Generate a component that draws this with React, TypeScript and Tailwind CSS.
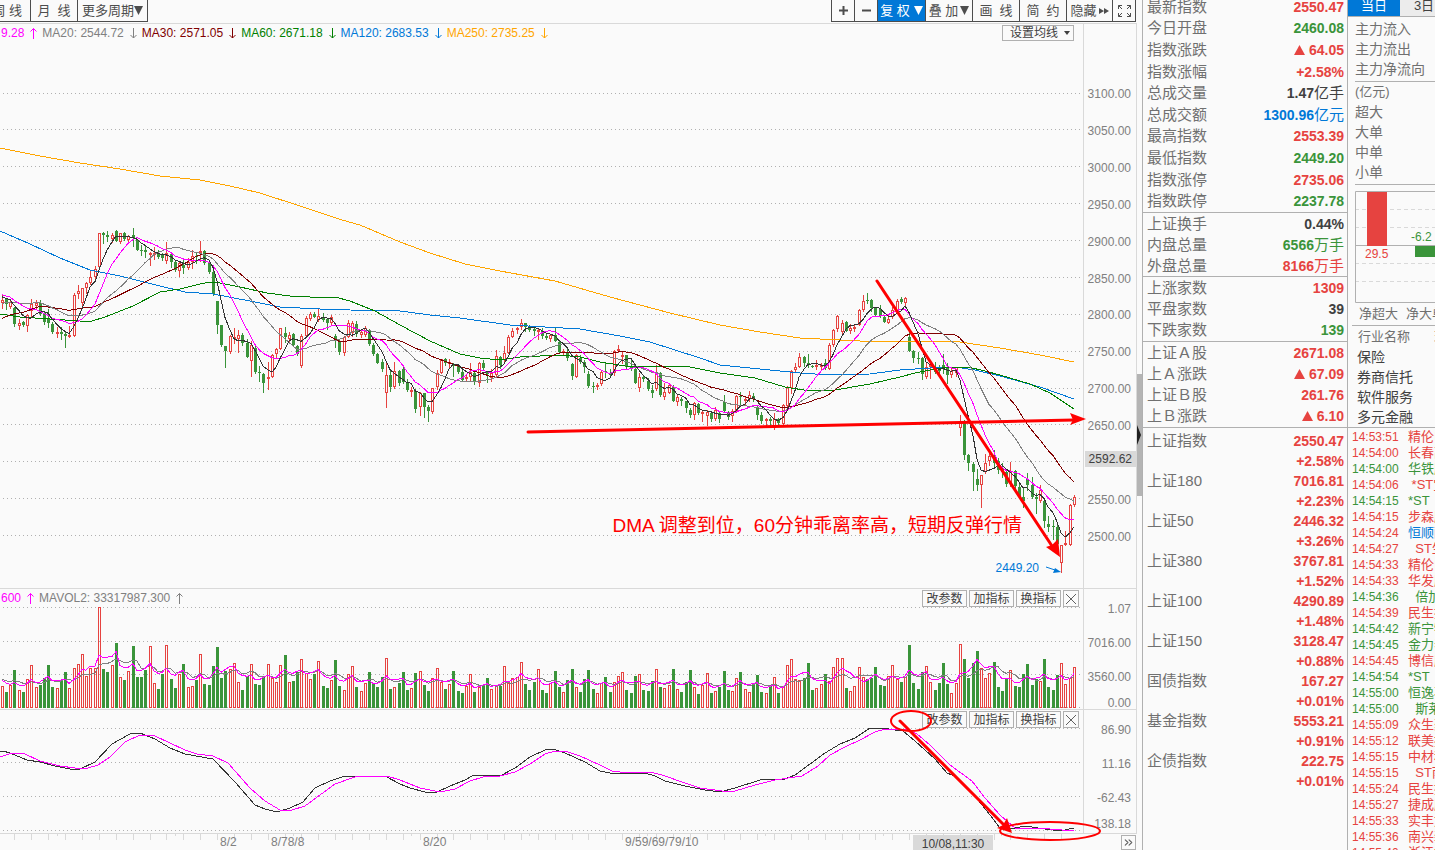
import { ChevronsRight } from 'lucide-react';
import clsx from 'clsx';

// [rising, high, body top, body bottom, low] on the price pane's own scale
type Candle = [number, number, number, number, number];

const CANDLES: Candle[] = [
  [1, 295, 300, 303, 308], [0, 298, 299, 304, 309], [1, 300, 302, 307, 308], [0, 307, 308, 324, 326], [1, 319, 323, 326, 329],
  [0, 321, 322, 325, 326], [1, 314, 315, 326, 331], [1, 299, 304, 311, 317], [1, 300, 303, 306, 308], [0, 300, 303, 314, 315],
  [0, 312, 313, 322, 324], [0, 309, 319, 323, 327], [0, 322, 324, 332, 333], [1, 327, 332, 334, 337], [0, 327, 332, 334, 339],
  [0, 331, 334, 336, 347], [1, 326, 335, 337, 337], [1, 293, 295, 336, 336], [1, 285, 291, 294, 298], [1, 288, 288, 303, 306],
  [1, 282, 283, 288, 293], [1, 271, 277, 283, 284], [1, 266, 269, 277, 278], [1, 233, 233, 267, 267], [0, 232, 233, 235, 243],
  [0, 231, 235, 237, 241], [1, 233, 235, 239, 242], [0, 230, 231, 241, 241], [1, 233, 233, 242, 243], [0, 232, 233, 239, 240],
  [1, 235, 236, 240, 241], [0, 228, 235, 238, 246], [0, 239, 240, 250, 250], [0, 245, 250, 251, 255], [0, 246, 250, 252, 257],
  [1, 252, 253, 255, 265], [1, 247, 253, 254, 259], [0, 250, 253, 257, 258], [0, 253, 255, 258, 260], [1, 242, 253, 261, 263],
  [0, 253, 254, 262, 267], [0, 261, 262, 270, 271], [1, 261, 263, 271, 276], [0, 259, 265, 268, 273], [1, 258, 262, 268, 269],
  [1, 250, 256, 262, 268], [0, 252, 256, 257, 263], [1, 241, 251, 253, 261], [0, 250, 251, 263, 264], [0, 262, 263, 272, 273],
  [0, 270, 272, 294, 295], [0, 301, 301, 325, 333], [0, 325, 325, 345, 346], [0, 346, 346, 351, 367], [1, 335, 336, 352, 353],
  [1, 328, 337, 338, 343], [1, 330, 335, 339, 352], [0, 333, 335, 343, 345], [0, 339, 343, 357, 357], [1, 341, 345, 361, 376],
  [0, 345, 348, 372, 373], [0, 366, 372, 373, 381], [0, 373, 374, 383, 392], [1, 362, 377, 379, 389], [1, 354, 355, 377, 377],
  [1, 348, 349, 354, 357], [1, 328, 328, 349, 349], [0, 327, 333, 337, 342], [1, 332, 335, 339, 343], [0, 333, 334, 345, 345],
  [0, 345, 346, 354, 355], [1, 334, 336, 366, 367], [1, 316, 318, 336, 337], [1, 312, 314, 319, 320], [0, 312, 314, 317, 317],
  [1, 309, 316, 320, 321], [0, 313, 317, 320, 321], [0, 318, 319, 323, 329], [1, 315, 317, 323, 324], [0, 334, 336, 341, 347],
  [0, 340, 341, 352, 354], [1, 336, 337, 353, 355], [1, 320, 323, 337, 337], [1, 321, 323, 333, 336], [0, 321, 324, 334, 336],
  [1, 330, 332, 335, 337], [1, 326, 328, 335, 336], [0, 329, 331, 344, 345], [0, 343, 345, 354, 355], [0, 353, 354, 363, 363],
  [0, 359, 362, 369, 371], [1, 363, 375, 393, 407], [0, 371, 375, 387, 391], [1, 362, 371, 387, 388], [0, 370, 371, 383, 385],
  [0, 365, 369, 382, 383], [0, 379, 382, 390, 391], [1, 387, 390, 391, 396], [0, 389, 391, 409, 412], [1, 392, 393, 407, 415],
  [0, 393, 393, 407, 417], [0, 405, 407, 411, 421], [1, 388, 388, 412, 413], [1, 370, 373, 387, 389], [1, 359, 359, 373, 373],
  [0, 358, 359, 363, 365], [1, 359, 362, 364, 367], [0, 363, 364, 366, 376], [0, 365, 365, 372, 373], [0, 370, 372, 380, 381],
  [1, 375, 377, 379, 380], [1, 363, 372, 377, 380], [0, 372, 373, 382, 384], [1, 362, 363, 383, 386], [0, 360, 363, 368, 370],
  [0, 372, 372, 374, 382], [1, 369, 373, 378, 381], [1, 350, 356, 375, 377], [0, 356, 357, 365, 368], [1, 346, 353, 360, 362],
  [1, 335, 337, 353, 353], [1, 328, 331, 337, 337], [1, 327, 328, 330, 333], [1, 319, 323, 327, 329], [0, 323, 323, 327, 331],
  [0, 325, 328, 330, 331], [0, 328, 329, 331, 335], [1, 328, 330, 332, 339], [0, 328, 331, 336, 338], [0, 334, 336, 338, 339],
  [1, 334, 335, 339, 341], [0, 327, 335, 341, 341], [0, 340, 342, 352, 352], [1, 349, 351, 353, 355], [0, 349, 352, 358, 360],
  [0, 363, 364, 376, 379], [1, 354, 355, 377, 377], [0, 355, 358, 362, 363], [0, 360, 362, 367, 372], [0, 371, 374, 386, 387],
  [0, 382, 386, 387, 392], [1, 383, 385, 387, 389], [1, 370, 372, 384, 385], [0, 363, 371, 372, 377], [0, 369, 373, 375, 376],
  [1, 350, 351, 373, 375], [1, 345, 349, 351, 352], [1, 352, 355, 357, 363], [0, 355, 355, 367, 369], [0, 360, 367, 369, 370],
  [0, 368, 369, 383, 383], [1, 373, 377, 388, 391], [0, 375, 377, 379, 381], [0, 378, 381, 389, 390], [0, 385, 390, 393, 397],
  [1, 365, 373, 389, 390], [0, 372, 373, 395, 396], [1, 383, 392, 397, 399], [1, 383, 385, 393, 393], [0, 385, 387, 401, 401],
  [1, 395, 397, 402, 405], [0, 397, 399, 401, 405], [0, 401, 401, 408, 412], [0, 408, 410, 415, 417], [1, 402, 403, 415, 419],
  [0, 403, 404, 413, 414], [1, 411, 412, 413, 421], [1, 410, 412, 416, 425], [0, 411, 413, 419, 421], [1, 407, 410, 419, 420],
  [0, 412, 413, 419, 422], [0, 395, 402, 411, 412], [0, 411, 412, 417, 419], [1, 409, 411, 416, 421], [1, 395, 396, 411, 412],
  [0, 392, 396, 397, 404], [1, 396, 399, 401, 405], [1, 391, 395, 399, 401], [0, 393, 396, 399, 401], [0, 406, 407, 415, 419],
  [0, 412, 415, 421, 423], [1, 418, 419, 421, 426], [0, 417, 419, 421, 425], [1, 413, 419, 428, 429], [0, 418, 419, 423, 425],
  [1, 404, 405, 424, 425], [1, 386, 387, 406, 406], [1, 370, 371, 388, 393], [1, 363, 367, 370, 372], [1, 353, 357, 367, 367],
  [0, 356, 357, 363, 366], [0, 354, 363, 365, 367], [0, 365, 366, 367, 367], [1, 360, 365, 367, 369], [1, 363, 365, 367, 369],
  [0, 359, 363, 368, 369], [1, 343, 345, 369, 369], [1, 329, 330, 345, 346], [1, 315, 316, 329, 331], [1, 320, 323, 332, 334],
  [0, 321, 322, 331, 331], [1, 324, 328, 331, 333], [1, 325, 327, 329, 331], [1, 309, 310, 325, 325], [1, 295, 301, 310, 311],
  [0, 293, 300, 301, 303], [0, 299, 300, 308, 311], [0, 307, 308, 315, 316], [0, 305, 309, 316, 317], [0, 316, 317, 322, 322],
  [1, 315, 319, 323, 323], [1, 307, 310, 317, 318], [1, 299, 301, 311, 311], [0, 297, 299, 302, 303], [1, 297, 298, 303, 307],
  [0, 332, 337, 351, 351], [0, 350, 351, 358, 362], [0, 352, 358, 359, 363], [0, 357, 358, 374, 379], [1, 363, 367, 377, 378],
  [1, 360, 365, 367, 378], [0, 362, 367, 372, 373], [0, 365, 369, 371, 373], [0, 354, 365, 367, 373], [0, 363, 367, 375, 383],
  [1, 367, 371, 375, 377], [1, 367, 367, 373, 376], [1, 415, 421, 428, 435], [0, 420, 421, 455, 459], [0, 454, 455, 463, 470],
  [0, 462, 464, 472, 490], [0, 469, 479, 485, 490], [1, 475, 475, 485, 507], [1, 454, 463, 472, 473], [1, 452, 456, 461, 465],
  [0, 450, 455, 463, 468], [0, 458, 461, 470, 473], [0, 463, 469, 472, 477], [0, 470, 472, 484, 486], [1, 462, 471, 483, 486],
  [0, 470, 471, 486, 490], [0, 483, 487, 497, 498], [0, 487, 497, 501, 507], [0, 473, 479, 485, 490], [0, 477, 485, 497, 498],
  [0, 493, 497, 499, 513], [1, 485, 490, 501, 502], [0, 500, 501, 521, 527], [0, 516, 524, 527, 531], [0, 520, 526, 527, 539],
  [0, 525, 527, 544, 547], [1, 545, 545, 563, 572], [1, 531, 543, 545, 545], [1, 504, 505, 545, 545], [1, 495, 497, 505, 506],
];

const VOLUMES = [
  65, 47, 68, 113, 53, 47, 86, 128, 62, 68, 89, 128, 62, 59, 80, 107, 59, 119, 133, 161,
  95, 119, 119, 302, 116, 107, 128, 194, 92, 83, 110, 185, 92, 92, 113, 185, 74, 56, 101, 188,
  86, 59, 101, 131, 62, 65, 83, 161, 71, 68, 125, 182, 89, 110, 116, 134, 77, 53, 95, 133,
  71, 68, 92, 131, 89, 77, 128, 158, 77, 80, 107, 146, 104, 86, 101, 140, 65, 59, 83, 143,
  65, 53, 101, 125, 62, 50, 74, 107, 74, 62, 92, 149, 56, 62, 74, 107, 53, 59, 104, 110,
  68, 50, 89, 119, 77, 56, 71, 110, 50, 44, 65, 101, 47, 62, 68, 89, 56, 68, 65, 125,
  74, 89, 92, 137, 71, 53, 77, 116, 53, 44, 74, 110, 62, 47, 83, 116, 62, 47, 86, 113,
  56, 44, 74, 92, 47, 77, 95, 107, 53, 44, 95, 101, 53, 50, 80, 116, 62, 59, 68, 116,
  56, 47, 77, 113, 62, 41, 68, 104, 44, 50, 62, 110, 53, 50, 89, 107, 56, 47, 71, 98,
  47, 44, 65, 92, 44, 62, 128, 146, 86, 83, 89, 134, 53, 59, 71, 101, 80, 122, 149, 149,
  59, 50, 65, 122, 92, 86, 89, 122, 68, 65, 95, 128, 86, 77, 92, 188, 74, 56, 107, 125,
  77, 53, 74, 134, 71, 44, 74, 191, 146, 89, 134, 170, 119, 89, 104, 137, 62, 50, 86, 113,
  65, 62, 101, 131, 68, 86, 80, 146, 62, 53, 98, 134, 71, 89, 122,
];

// closes before the first visible bar, oldest first
const LEAD_CLOSES = [
  ...Array(10).fill(352),
  ...Array(10).fill(314),
  ...Array(5).fill(292),
  ...Array(5).fill(296),
];
const LEAD_VOLUMES = Array(10).fill(88);

const MA60 =
  '0,314 20,317 50,319 80,321 92,321 105,317 133,306 160,292 180,289 200,284 210,282 220,283 240,287 267,293 290,296 310,297 335,297 350,301 375,311 400,325 430,341 460,354 480,358 500,360 520,357 560,355 580,357 600,362 625,366 690,367 720,373 755,378 785,387 810,391 835,390 870,384 900,377 915,373 935,369 950,367 968,367 985,371 1000,375 1030,384 1050,393 1074,409';
const MA120 =
  '0,231 30,244 60,258 90,270 120,276 160,286 185,292 213,294 250,301 280,307 320,309 350,310 400,311 430,315 460,318 510,325 580,329 620,336 650,342 700,358 720,365 760,369 800,373 830,375 870,374 900,370 930,368 955,367 975,370 1000,376 1040,387 1074,399';
const MA250 =
  '0,148 40,156 80,163 120,169 160,176 200,180 230,186 260,193 300,206 342,220 360,225 400,242 430,253 465,264 500,271 555,281 610,297 670,313 720,325 760,332 800,338 860,341 920,341 960,342 1000,348 1040,355 1074,362';
const DIF =
  '0,751 3,751 10,753 27,760 40,762 55,766 70,769 80,769 95,762 112,744 130,734 140,733 155,739 170,748 185,754 213,759 235,782 255,805 265,809 277,812 290,808 303,802 315,788 330,781 345,776 385,776 400,784 410,788 425,792 437,792 450,786 465,780 472,776 482,775 500,776 515,768 530,757 545,750 553,749 565,753 585,762 600,771 610,773 645,773 655,776 665,781 685,786 705,790 720,792 735,788 760,780 785,779 795,775 825,753 840,744 855,738 870,728 882,728 895,730 903,731 915,741 935,759 947,773 957,777 975,796 990,815 1000,828 1010,829 1025,826 1045,829 1060,831 1074,828';
const DIFMA =
  '0,757 12,753 25,754 40,761 60,766 75,768 88,768 98,765 110,757 125,742 140,735 155,736 170,743 185,750 197,754 213,756 228,763 250,788 265,801 280,810 292,810 305,806 320,795 335,784 355,777 387,776 400,780 420,788 440,792 455,789 470,781 483,777 500,776 515,772 530,764 545,754 555,751 565,751 580,756 600,765 612,771 620,772 650,772 662,775 685,783 700,788 722,791 735,791 755,785 775,780 802,776 818,766 830,755 845,747 860,740 875,732 885,729 905,729 917,734 930,745 950,765 972,781 985,798 1000,815 1015,828 1050,829 1062,830 1074,830';

const PLOT_WIDTH = 1083;
const RED = '#e64340';
const GREEN = '#3a943a';

const barX = (i: number) => Math.floor(2.3 + i * 4.2205);

const movingAverage = (lead: number[], values: number[], span: number, toY = (v: number) => v) => {
  const all = [...lead, ...values];
  return values
    .map((_, i) => {
      const end = lead.length + i + 1;
      const slice = all.slice(Math.max(0, end - span), end);
      const avg = slice.reduce((a, b) => a + b, 0) / slice.length;
      return `${barX(i)},${toY(avg).toFixed(1)}`;
    })
    .join(' ');
};

const closes = CANDLES.map(([up, , top, bottom]) => (up ? top : bottom));

const Line = ({ points, color }: { points: string; color: string }) => (
  <polyline points={points} fill="none" stroke={color} strokeWidth="1" shapeRendering="crispEdges" />
);

const GridLines = ({ ys }: { ys: number[] }) => (
  <g stroke="#b0b0b0" strokeDasharray="1 3" shapeRendering="crispEdges">
    {ys.map((y) => (
      <line key={y} x1="3" x2={PLOT_WIDTH} y1={y + 0.5} y2={y + 0.5} />
    ))}
  </g>
);

const PriceChart = () => (
  <svg viewBox="0 24 1083 564" preserveAspectRatio="none" className="absolute inset-0 h-full w-full">
    <GridLines ys={[93, 129, 166, 203, 240, 277, 314, 351, 388, 424, 461, 498, 535]} />
    <g shapeRendering="crispEdges">
      {CANDLES.map(([up, high, top, bottom, low], i) => {
        const x = barX(i);
        return up ? (
          <g key={i} stroke={RED} fill="none">
            <path d={`M${x + 0.5} ${high}V${top}M${x + 0.5} ${bottom}V${low + 1}`} />
            <rect x={x - 0.5} y={top + 0.5} width="2" height={Math.max(1, bottom - top - 1)} />
          </g>
        ) : (
          <g key={i} fill={GREEN}>
            <rect x={x} y={high} width="1" height={low - high + 1} />
            <rect x={x - 1} y={top} width="3" height={Math.max(1, bottom - top)} />
          </g>
        );
      })}
    </g>
    <Line points={MA250} color="#ffa500" />
    <Line points={MA120} color="#0078d7" />
    <Line points={MA60} color="#008000" />
    <Line points={movingAverage(LEAD_CLOSES, closes, 30)} color="#800000" />
    <Line points={movingAverage(LEAD_CLOSES, closes, 20)} color="#808080" />
    <Line points={movingAverage(LEAD_CLOSES, closes, 10)} color="#ff00ff" />
    <Line points={movingAverage(LEAD_CLOSES, closes, 5)} color="#333333" />
  </svg>
);

const VolumeChart = () => {
  const toY = (v: number) => 708 - v / 3;
  return (
    <svg viewBox="0 589 1083 120" preserveAspectRatio="none" className="absolute inset-0 h-full w-full">
      <GridLines ys={[607, 641, 674, 707]} />
      <g shapeRendering="crispEdges">
        {VOLUMES.map((v, i) => {
          const x = barX(i);
          const y = Math.round(toY(v));
          return CANDLES[i][0] ? (
            <rect key={i} x={x - 0.5} y={y + 0.5} width="2" height={707 - y} fill="none" stroke={RED} />
          ) : (
            <rect key={i} x={x - 1} y={y} width="3" height={708 - y} fill={GREEN} />
          );
        })}
      </g>
      <Line points={movingAverage(LEAD_VOLUMES, VOLUMES, 10, toY)} color="#808080" />
      <Line points={movingAverage(LEAD_VOLUMES, VOLUMES, 5, toY)} color="#ff00ff" />
    </svg>
  );
};

const DmaChart = () => (
  <svg viewBox="0 710 1083 123" preserveAspectRatio="none" className="absolute inset-0 h-full w-full">
    <GridLines ys={[728, 762, 796, 830]} />
    <Line points={DIF} color="#333333" />
    <Line points={DIFMA} color="#ff00ff" />
  </svg>
);

const TimeTicks = () => (
  <svg viewBox="0 0 1083 16" preserveAspectRatio="none" className="absolute inset-0 h-full w-full">
    <g fill="#d9d9d9">
      {Array.from({ length: 63 }, (_, k) => (
        <rect key={k} x={barX(3 + k * 4)} y="0" width="1" height="6" />
      ))}
      {Array.from({ length: 9 }, (_, k) => (
        <rect key={k} x={57 + k * 118} y="0" width="1" height="2" />
      ))}
    </g>
  </svg>
);

// hand-drawn marks that run over all the panes
const Annotations = () => (
  <svg
    viewBox="0 24 1137 826"
    preserveAspectRatio="none"
    className="pointer-events-none absolute inset-0 h-full w-full"
  >
    <g stroke="#ff0000" strokeWidth="3" strokeLinecap="round" fill="none">
      <path d="M877 281L1052 546" />
      <path d="M528 432L1074 420" />
      <path d="M900 721L1004 825" />
    </g>
    <g fill="#ff0000">
      <path d="M1060 557L1046 547L1052 545L1058 539Z" />
      <path d="M1086 419L1070 425L1073 420L1070 413Z" />
      <path d="M1012 833L997 828L1003 825L1007 818Z" />
    </g>
    <g stroke="#ff0000" strokeWidth="2" fill="none">
      <ellipse cx="911" cy="721" rx="20" ry="10" />
      <ellipse cx="1050" cy="831" rx="50" ry="9" />
    </g>
    <path d="M1046 567L1055 570" stroke="#0078d7" fill="none" />
    <path d="M1061 572L1053 573L1055 568Z" fill="#0078d7" />
  </svg>
);

const TrendArrow = ({ up }: { up?: boolean }) => (
  <svg width="18" height="12" viewBox="0 0 18 12" className="shrink-0" fill="none" stroke="currentColor">
    {up ? <path d="M9.5 12V1.5M6.5 4.5L9.5 1.5L12.5 4.5" /> : <path d="M9.5 1V11M6.5 8L9.5 11L12.5 8" />}
  </svg>
);

type LegendItem = { text: string; up?: boolean; color: string };

const LEGEND: LegendItem[] = [
  { text: '9.28', up: true, color: 'text-[#ff00ff]' },
  { text: 'MA20: 2544.72', color: 'text-[#808080]' },
  { text: 'MA30: 2571.05', color: 'text-[#800000]' },
  { text: 'MA60: 2671.18', color: 'text-[#008000]' },
  { text: 'MA120: 2683.53', color: 'text-[#0078d7]' },
  { text: 'MA250: 2735.25', color: 'text-[#ffa500]' },
];

const VOLUME_LEGEND: LegendItem[] = [
  { text: '600', up: true, color: 'text-[#ff00ff]' },
  { text: 'MAVOL2: 33317987.300', up: true, color: 'text-[#808080]' },
];

const Legend = ({ items }: { items: LegendItem[] }) => (
  <div className="absolute left-px top-0 flex h-[18px] items-center whitespace-nowrap text-xs">
    {items.map((item) => (
      <span key={item.text} className={clsx('flex items-center', item.color)}>
        {item.text}
        <TrendArrow up={item.up} />
      </span>
    ))}
  </div>
);

const PaneButtons = () => (
  <div className="absolute right-1 top-px flex gap-[2px]">
    {['改参数', '加指标', '换指标'].map((label) => (
      <button
        key={label}
        className="h-[17px] w-[45px] border border-[#b0b0b0] bg-[#fafafa] text-center text-xs leading-[17px] text-[#404040]"
      >
        {label}
      </button>
    ))}
    <button aria-label="关闭" className="flex h-[17px] w-4 items-center justify-center border border-[#b0b0b0] bg-[#fafafa]">
      <svg width="10" height="10" viewBox="0 0 10 10" stroke="#606060">
        <path d="M0 0L10 10M10 0L0 10" />
      </svg>
    </button>
  </div>
);

const PRICE_LABELS = [
  '3100.00', '3050.00', '3000.00', '2950.00', '2900.00', '2850.00', '2800.00',
  '2750.00', '2700.00', '2650.00', '', '2550.00', '2500.00',
];

const AxisLabels = ({ labels }: { labels: string[] }) => (
  <div className="w-[54px] shrink-0 border-x border-[#d9d9d9] pr-[5px] pt-3 text-right text-xs leading-4 text-[#808080]">
    {labels.map((label, i) => (
      <div key={label} className={i === 3 ? '-mt-2 h-4' : 'h-[34px]'}>
        {label}
      </div>
    ))}
  </div>
);

const TIME_LABELS = [
  { text: '8/2', at: 220 },
  { text: '8/78/8', at: 271 },
  { text: '8/20', at: 423 },
  { text: '9/59/69/79/10', at: 625 },
];

const Triangle = ({ className }: { className?: string }) => (
  <svg width="9" height="9" viewBox="0 0 9 9" className={className} fill="currentColor">
    <path d="M0 0H9L4.5 9Z" />
  </svg>
);

const toolButton = 'flex h-full items-center justify-center whitespace-pre border-r border-[#4d4d4d]';

const Toolbar = () => (
  <div className="flex h-[23px] shrink-0 justify-between pr-px text-[13px] leading-5 text-[#4d4d4d]">
    <div className="flex h-[22px] border-b border-[#4d4d4d]">
      <button className={clsx(toolButton, 'w-[31px] justify-end pr-2')}>周 线</button>
      <button className={clsx(toolButton, 'w-[47px]')}>月  线</button>
      <button className={clsx(toolButton, 'w-[70px]')}>
        更多周期
        <Triangle />
      </button>
    </div>
    <div className="flex h-[22px] border-b border-l border-[#4d4d4d]">
      <button aria-label="放大" className={clsx(toolButton, 'w-[23px]')}>
        <svg width="9" height="9" viewBox="0 0 9 9" stroke="currentColor" strokeWidth="2">
          <path d="M0 4.5H9M4.5 0V9" />
        </svg>
      </button>
      <button aria-label="缩小" className={clsx(toolButton, 'w-[23px]')}>
        <svg width="9" height="9" viewBox="0 0 9 9" stroke="currentColor" strokeWidth="2">
          <path d="M0 4.5H9" />
        </svg>
      </button>
      <button className={clsx(toolButton, 'w-12 gap-1 bg-[#0078d7] text-white')}>
        复 权
        <Triangle />
      </button>
      <button className={clsx(toolButton, 'w-[47px] gap-[2px]')}>
        叠 加
        <Triangle />
      </button>
      <button className={clsx(toolButton, 'w-[47px]')}>画  线</button>
      <button className={clsx(toolButton, 'w-[47px]')}>简  约</button>
      <button className={clsx(toolButton, 'w-[46px] gap-[2px]')}>
        隐藏
        <svg width="10" height="6" viewBox="0 0 10 6" fill="currentColor">
          <path d="M0 0L5 3L0 6ZM5 0L10 3L5 6Z" />
        </svg>
      </button>
      <button aria-label="全屏" className={clsx(toolButton, 'w-[23px]')}>
        <svg width="13" height="12" viewBox="0 0 13 12" stroke="currentColor" fill="none">
          <path d="M.5 4V.5H4M.5 .5L4 4M9 .5H12.5V4M12.5 .5L9 4M.5 8V11.5H4M.5 11.5L4 8M12.5 8V11.5H9M12.5 11.5L9 8" />
        </svg>
      </button>
    </div>
  </div>
);

const ChartArea = () => (
  <section className="flex min-w-0 flex-1 flex-col">
    <Toolbar />
    <div className="relative flex min-h-0 flex-1 flex-col border-t border-[#d9d9d9]">
      <div className="flex min-h-0 flex-1 border-b border-[#d9d9d9]">
        <div className="relative min-w-0 flex-1">
          <PriceChart />
          <Legend items={LEGEND} />
          <button className="absolute right-[9px] top-px flex h-4 w-[72px] items-center justify-center gap-[6px] border border-[#b0b0b0] bg-[#fafafa] pl-1 text-xs leading-4 text-[#404040]">
            设置均线
            <svg width="6" height="4" viewBox="0 0 6 4" fill="currentColor">
              <path d="M0 0H6L3 4Z" />
            </svg>
          </button>
        </div>
        <div className="relative flex w-[54px] shrink-0 flex-col justify-between border-x border-[#d9d9d9] pb-[43px] pr-[5px] pt-[62px] text-right text-xs leading-4 text-[#808080]">
          {PRICE_LABELS.map((label, i) => (
            <div key={i} className="h-4">{label}</div>
          ))}
          <div className="absolute left-px right-0 top-[427px] bg-[#d9d9d9] pr-1 text-[#404040]">2592.62</div>
        </div>
      </div>

      <div className="flex h-[121px] shrink-0 border-b border-[#d9d9d9]">
        <div className="relative min-w-0 flex-1">
          <VolumeChart />
          <Legend items={VOLUME_LEGEND} />
          <PaneButtons />
        </div>
        <AxisLabels labels={['1.07', '7016.00', '3560.00', '0.00']} />
      </div>

      <div className="flex h-[124px] shrink-0 border-b border-[#d9d9d9]">
        <div className="relative min-w-0 flex-1">
          <DmaChart />
          <PaneButtons />
        </div>
        <AxisLabels labels={['86.90', '11.16', '-62.43', '138.18']} />
      </div>

      <div className="flex h-4 shrink-0 text-xs leading-4 text-[#808080]">
        <div className="relative min-w-0 flex-1">
          <TimeTicks />
          {TIME_LABELS.map((label) => (
            <span key={label.text} className="absolute top-0" style={{ left: `${(label.at / PLOT_WIDTH) * 100}%` }}>
              {label.text}
            </span>
          ))}
          <span className="absolute right-[90px] top-px h-[15px] w-20 bg-[#d9d9d9] pt-px text-center text-[#404040]">
            10/08,11:30
          </span>
        </div>
        <div className="flex w-[54px] shrink-0 justify-end pr-px pt-px">
          <button aria-label="展开" className="flex h-[15px] w-[15px] items-center justify-center border border-[#b0b0b0] text-[#606060]">
            <ChevronsRight size={13} strokeWidth={2} />
          </button>
        </div>
      </div>

      <Annotations />
      <p className="absolute right-[115px] top-[488px] whitespace-nowrap text-[19px] leading-7 text-[#ff0000]">
        DMA 调整到位，60分钟乖离率高，短期反弹行情
      </p>
      <span className="absolute right-[98px] top-[536px] text-xs leading-4 text-[#0078d7]">2449.20</span>
    </div>
  </section>
);

const Splitter = () => (
  <div className="relative w-[5px] shrink-0">
    <div className="absolute top-[44%] h-[122px] w-full bg-[#b4b4b4]" />
    <svg width="4" height="20" viewBox="0 0 4 20" className="absolute left-0 top-[50%]">
      <path d="M0 0L4 10L0 20Z" fill="#202020" />
    </svg>
  </div>
);

const tones = {
  up: 'text-[#e64340]',
  down: 'text-[#3a943a]',
  flat: 'text-[#404040]',
  info: 'text-[#0078d7]',
};

type Quote = {
  label: string;
  value: string;
  unit?: string;
  tone: keyof typeof tones;
  rise?: boolean;
};

const SUMMARY: Quote[] = [
  { label: '最新指数', value: '2550.47', tone: 'up' },
  { label: '今日开盘', value: '2460.08', tone: 'down' },
  { label: '指数涨跌', value: '64.05', tone: 'up', rise: true },
  { label: '指数涨幅', value: '+2.58%', tone: 'up' },
  { label: '总成交量', value: '1.47', unit: '亿手', tone: 'flat' },
  { label: '总成交额', value: '1300.96', unit: '亿元', tone: 'info' },
  { label: '最高指数', value: '2553.39', tone: 'up' },
  { label: '最低指数', value: '2449.20', tone: 'down' },
  { label: '指数涨停', value: '2735.06', tone: 'up' },
  { label: '指数跌停', value: '2237.78', tone: 'down' },
];

const TURNOVER: Quote[] = [
  { label: '上证换手', value: '0.44%', tone: 'flat' },
  { label: '内盘总量', value: '6566', unit: '万手', tone: 'down' },
  { label: '外盘总量', value: '8166', unit: '万手', tone: 'up' },
];

const BREADTH: Quote[] = [
  { label: '上涨家数', value: '1309', tone: 'up' },
  { label: '平盘家数', value: '39', tone: 'flat' },
  { label: '下跌家数', value: '139', tone: 'down' },
];

const SHARES: Quote[] = [
  { label: '上证Ａ股', value: '2671.08', tone: 'up' },
  { label: '上Ａ涨跌', value: '67.09', tone: 'up', rise: true },
  { label: '上证Ｂ股', value: '261.76', tone: 'up' },
  { label: '上Ｂ涨跌', value: '6.10', tone: 'up', rise: true },
];

const INDEXES = [
  ['上证指数', '2550.47', '+2.58%'],
  ['上证180', '7016.81', '+2.23%'],
  ['上证50', '2446.32', '+3.26%'],
  ['上证380', '3767.81', '+1.52%'],
  ['上证100', '4290.89', '+1.48%'],
  ['上证150', '3128.47', '+0.88%'],
  ['国债指数', '167.27', '+0.01%'],
  ['基金指数', '5553.21', '+0.91%'],
  ['企债指数', '222.75', '+0.01%'],
];

const QuoteGroup = ({ quotes, className }: { quotes: Quote[]; className: string }) => (
  <dl className={clsx('grid shrink-0 auto-rows-fr border-b border-[#b0b0b0] pl-1 pr-[3px]', className)}>
    {quotes.map((q) => (
      <div key={q.label} className="flex items-center justify-between leading-5">
        <dt className="text-[15px] text-[#707070]">{q.label}</dt>
        <dd className={clsx('flex items-center text-sm font-bold', tones[q.tone])}>
          {q.rise && (
            <svg width="11" height="10" viewBox="0 0 11 10" className="mr-1" fill="currentColor">
              <path d="M5.5 0L11 10H0Z" />
            </svg>
          )}
          {q.value}
          {q.unit && <span className="text-[15px] font-normal">{q.unit}</span>}
        </dd>
      </div>
    ))}
  </dl>
);

const QuotePanel = () => (
  <section className="flex w-[205px] shrink-0 flex-col border-l border-[#b0b0b0]">
    <QuoteGroup quotes={SUMMARY} className="-mt-1 h-[217px]" />
    <QuoteGroup quotes={TURNOVER} className="h-16" />
    <QuoteGroup quotes={BREADTH} className="h-[65px]" />
    <QuoteGroup quotes={SHARES} className="h-[86px]" />
    <dl className="pl-1 pr-[3px] pt-[3px]">
      {INDEXES.map(([name, value, change]) => (
        <div key={name} className="flex justify-between leading-5">
          <dt className="text-[15px] text-[#707070]">{name}</dt>
          <dd className="text-right text-sm font-bold leading-5 text-[#e64340]">
            {value}
            <br />
            {change}
          </dd>
        </div>
      ))}
    </dl>
  </section>
);

const TICKER: [string, string, keyof typeof tones, keyof typeof tones][] = [
  ['14:53:51', '精伦电子', 'up', 'up'],
  ['14:54:00', '长春高新', 'up', 'up'],
  ['14:54:00', '华铁股份', 'down', 'down'],
  ['14:54:06', ' *ST宝鼎', 'up', 'up'],
  ['14:54:15', '*ST', 'down', 'down'],
  ['14:54:15', '步森股份', 'up', 'up'],
  ['14:54:24', '恒顺醋业', 'up', 'info'],
  ['14:54:27', '  ST生化', 'up', 'up'],
  ['14:54:33', '精伦电子', 'up', 'up'],
  ['14:54:33', '华发股份', 'up', 'up'],
  ['14:54:36', '  倍加洁', 'down', 'down'],
  ['14:54:39', '民生控股', 'up', 'up'],
  ['14:54:42', '新宁物流', 'down', 'down'],
  ['14:54:45', '金力泰', 'down', 'down'],
  ['14:54:45', '博信股份', 'up', 'up'],
  ['14:54:54', '*ST', 'down', 'down'],
  ['14:55:00', '恒逸石化', 'down', 'down'],
  ['14:55:00', '  斯莱克', 'down', 'down'],
  ['14:55:09', '众生药业', 'up', 'up'],
  ['14:55:12', '联美控股', 'up', 'up'],
  ['14:55:15', '中材科技', 'up', 'up'],
  ['14:55:15', '  ST南化', 'up', 'up'],
  ['14:55:24', '民生控股', 'up', 'up'],
  ['14:55:27', '捷成股份', 'up', 'up'],
  ['14:55:33', '实丰文化', 'up', 'up'],
  ['14:55:36', '南兴装备', 'up', 'up'],
  ['14:55:40', '浙江龙盛', 'up', 'up'],
];

const FlowBars = () => (
  <svg width="80" height="112" viewBox="0 0 80 112" className="ml-[7px] mt-[6px] block shrink-0">
    <g stroke="#d9d9d9" strokeDasharray="4 3">
      <path d="M0 18.5H80M0 36.5H80M0 72.5H80M0 90.5H80" />
    </g>
    <path d="M80 .5H.5V111.5H80M0 54.5H80" stroke="#b0b0b0" fill="none" />
    <rect x="12" y="1" width="20" height="54" fill={RED} />
    <rect x="60" y="55" width="20" height="11" fill={GREEN} />
    <text x="10" y="67" fontSize="12" fill={RED}>29.5</text>
    <text x="56" y="50" fontSize="12" fill={GREEN}>-6.2</text>
  </svg>
);

const FlowPanel = () => (
  <section className="flex w-[88px] shrink-0 flex-col overflow-hidden whitespace-nowrap border-l border-[#b0b0b0] text-sm text-[#707070]">
    <div className="flex h-[17px] shrink-0 border-b border-[#b0b0b0] text-[13px] leading-3">
      <button className="w-[52px] shrink-0 bg-[#0078d7] pb-1 text-white">当日</button>
      <button className="w-12 shrink-0 bg-[#ececec] pb-1 text-[#404040]">3日</button>
    </div>
    <ul className="ml-[7px] h-[65px] shrink-0 border-b border-[#b0b0b0] pt-[2px] leading-5">
      <li>主力流入</li>
      <li>主力流出</li>
      <li>主力净流向</li>
    </ul>
    <ul className="ml-[7px] h-[103px] shrink-0 border-b border-[#b0b0b0] leading-5">
      <li className="text-[13px]">(亿元)</li>
      <li>超大</li>
      <li>大单</li>
      <li>中单</li>
      <li>小单</li>
    </ul>
    <FlowBars />
    <div className="ml-1 flex h-[23px] shrink-0 gap-2 border-b border-[#b0b0b0] pl-[7px] text-[13px] leading-[22px]">
      <span>净超大</span>
      <span>净大单</span>
    </div>
    <div className="flex shrink-0 gap-6 pl-[10px] text-[13px] leading-[21px]">
      <span>行业名称</span>
      <span>现价</span>
    </div>
    <ul className="h-[81px] shrink-0 border-b border-[#b0b0b0] pl-[9px] leading-5 text-[#404040]">
      <li>保险</li>
      <li>券商信托</li>
      <li>软件服务</li>
      <li>多元金融</li>
    </ul>
    <table className="mt-px w-max border-collapse">
      <tbody>
        {TICKER.map(([time, name, timeTone, nameTone], i) => (
          <tr key={i} className="h-4">
            <td className={clsx('w-14 p-0 pl-1 text-xs leading-4', tones[timeTone])}>{time}</td>
            <td className={clsx('whitespace-pre p-0 pl-1 text-[13px] leading-4', tones[nameTone])}>{name}</td>
          </tr>
        ))}
      </tbody>
    </table>
  </section>
);

const App = () => (
  <main className="flex h-screen min-h-[640px] overflow-hidden bg-[#fafafa] font-['Liberation_Sans','Noto_Sans_CJK_SC',sans-serif]">
    <ChartArea />
    <Splitter />
    <QuotePanel />
    <FlowPanel />
  </main>
);

export default App;
